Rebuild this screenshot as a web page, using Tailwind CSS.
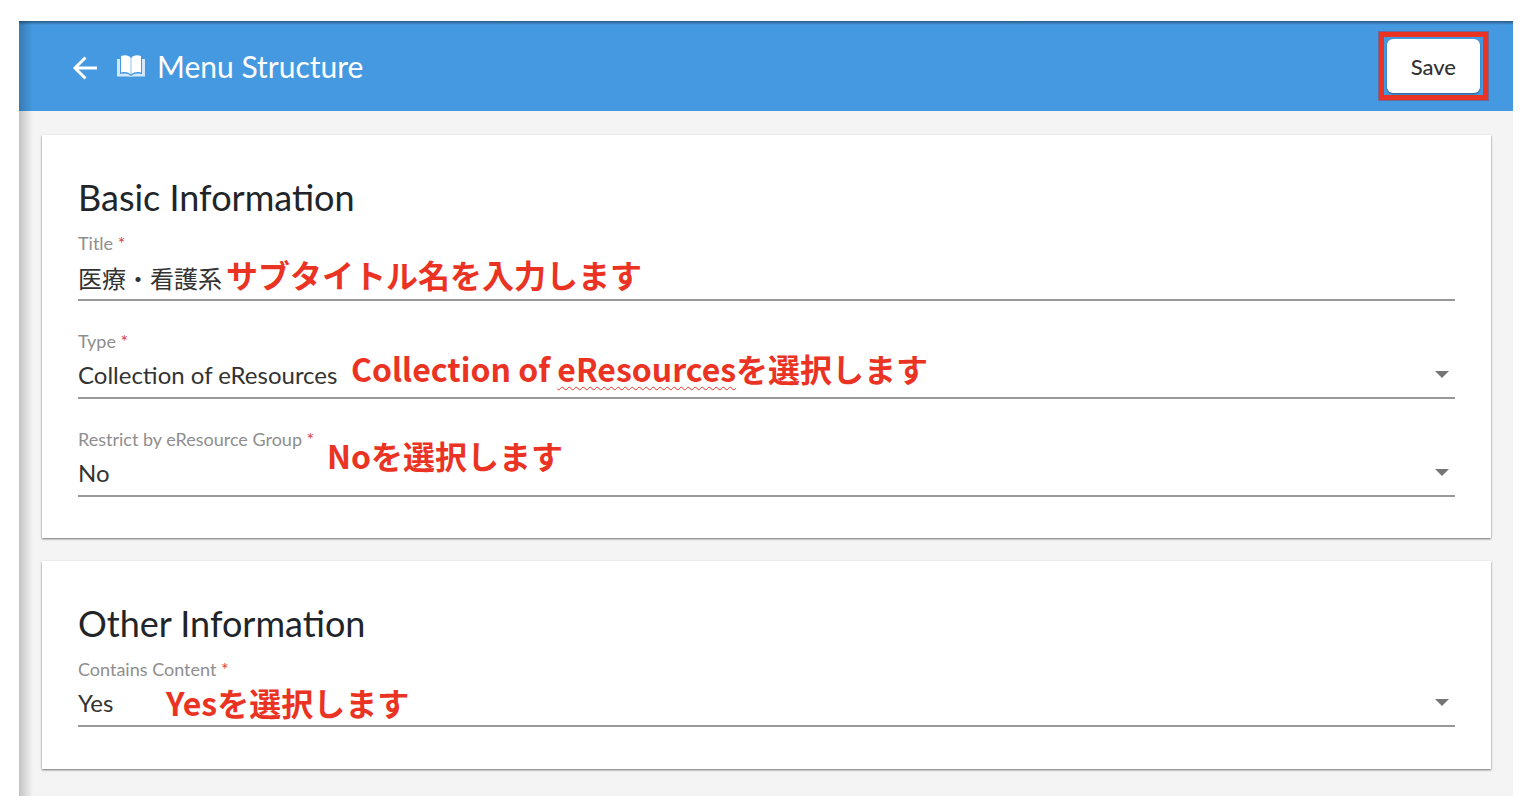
<!DOCTYPE html>
<html lang="ja">
<head>
  <meta charset="UTF-8">
  <meta name="viewport" content="width=device-width, initial-scale=1.0">
  <title>Menu Structure</title>
  <script src="https://cdn.jsdelivr.net/npm/@tailwindcss/browser@4"></script>
</head>
<body class="min-h-screen bg-white pl-[19px] pr-[15px] pt-[21px] pb-[15px] font-[Lato,'Noto_Sans_CJK_JP',sans-serif] text-[#212529]">
  <div class="relative bg-[#f4f4f4]">
    <header class="flex h-[90px] items-center bg-[#4599e1] pl-[50px] pr-[25px] text-white">
      <a href="#" aria-label="Back" class="mt-1 mr-4">
        <svg class="h-8 w-8" viewBox="0 0 32 32" fill="none" stroke="currentColor" stroke-width="3">
          <path d="M28 16H6M16.5 5.5 6 16l10.500 10.500"/>
        </svg>
      </a>
      <svg class="mr-3 h-[22px] w-[28px]" viewBox="0 0 28 22" fill="none">
        <path d="M0 4h3v15c4-1 8-1 11 2 3-3 7-3 11-2V4h3v17.500H16l-2 .5-2-.5H0z" fill="#d3e9fb"/>
        <path d="M4 1c4-1.500 8-1 9.700 2v16.500C11 17 8 16.500 4 17.500zM24 1c-4-1.500-8-1-9.700 2v16.500c2.700-2.500 5.700-3 9.700-2z" fill="#fff"/>
      </svg>
      <h1 class="text-[30px] leading-9">Menu Structure</h1>
      <div class="ml-auto border-[5px] border-[#ea3323] px-[3px] py-[2px] outline outline-[#8b4a63]/60">
        <button type="button" class="h-[54px] rounded-md bg-white px-6 text-[22px] font-medium text-[#333] shadow-[0_1px_2px_rgba(0,0,0,0.4)]">Save</button>
      </div>
    </header>

    <main class="flex flex-col gap-[23px] pt-6 pr-[22px] pb-[27px] pl-[23px]">
      <section class="bg-white px-9 pt-10 pb-[41px] shadow-[0_1px_2px_rgba(0,0,0,0.55)]">
        <h2 class="mb-3 text-[36px] leading-[44px]">Basic Information</h2>
        <div class="flex flex-col gap-7">
          <div class="relative">
            <label for="title" class="block text-[18px] leading-6 text-[#8e8e8e]">Title <span class="text-[#d9433b]">*</span></label>
            <input id="title" type="text" value="医療・看護系" class="block h-[46px] w-full border-b-2 border-[#999] bg-transparent text-[24px] text-[#333] outline-none">
            <p class="pointer-events-none absolute top-[23px] left-[148px] font-['Noto_Sans_CJK_JP',sans-serif] text-[32px] leading-10 font-bold whitespace-nowrap text-[#ea3323]">サブタイトル名を入力します</p>
          </div>
          <div class="relative">
            <label for="type" class="block text-[18px] leading-6 text-[#8e8e8e]">Type <span class="text-[#d9433b]">*</span></label>
            <select id="type" class="block h-[46px] w-full appearance-none border-b-2 border-[#999] bg-transparent text-[24px] text-[#333] outline-none">
              <option>Collection of eResources</option>
            </select>
            <svg class="pointer-events-none absolute right-[6px] bottom-[21px] h-[7px] w-[14px]" viewBox="0 0 14 7"><path d="M0 0h14L7 7z" fill="#757575"/></svg>
            <p class="pointer-events-none absolute top-[19px] left-[273px] font-['Noto_Sans_CJK_JP',sans-serif] text-[32px] leading-10 font-bold whitespace-nowrap text-[#ea3323]">Collection of <span class="underline decoration-wavy decoration-1 underline-offset-4">eResources</span>を選択します</p>
          </div>
          <div class="relative">
            <label for="restrict" class="block text-[18px] leading-6 text-[#8e8e8e]">Restrict by eResource Group <span class="text-[#d9433b]">*</span></label>
            <select id="restrict" class="block h-[46px] w-full appearance-none border-b-2 border-[#999] bg-transparent text-[24px] text-[#333] outline-none">
              <option>No</option>
            </select>
            <svg class="pointer-events-none absolute right-[6px] bottom-[21px] h-[7px] w-[14px]" viewBox="0 0 14 7"><path d="M0 0h14L7 7z" fill="#757575"/></svg>
            <p class="pointer-events-none absolute top-[8px] left-[249px] font-['Noto_Sans_CJK_JP',sans-serif] text-[32px] leading-10 font-bold whitespace-nowrap text-[#ea3323]">Noを選択します</p>
          </div>
        </div>
      </section>

      <section class="bg-white px-9 pt-10 pb-[42px] shadow-[0_1px_2px_rgba(0,0,0,0.55)]">
        <h2 class="mb-3 text-[36px] leading-[44px]">Other Information</h2>
        <div class="relative">
          <label for="contains" class="block text-[18px] leading-6 text-[#8e8e8e]">Contains Content <span class="text-[#d9433b]">*</span></label>
          <select id="contains" class="block h-[46px] w-full appearance-none border-b-2 border-[#999] bg-transparent text-[24px] text-[#333] outline-none">
            <option>Yes</option>
          </select>
          <svg class="pointer-events-none absolute right-[6px] bottom-[21px] h-[7px] w-[14px]" viewBox="0 0 14 7"><path d="M0 0h14L7 7z" fill="#757575"/></svg>
          <p class="pointer-events-none absolute top-[25px] left-[88px] font-['Noto_Sans_CJK_JP',sans-serif] text-[32px] leading-10 font-bold whitespace-nowrap text-[#ea3323]">Yesを選択します</p>
        </div>
      </section>
    </main>

    <!-- shade along the left and top edges -->
    <div class="pointer-events-none absolute inset-y-0 left-0 w-[14px] bg-linear-to-r from-black/20 to-transparent"></div>
    <div class="pointer-events-none absolute inset-x-0 top-0 h-1 bg-linear-to-b from-black/40 to-transparent"></div>
  </div>
</body>
</html>
